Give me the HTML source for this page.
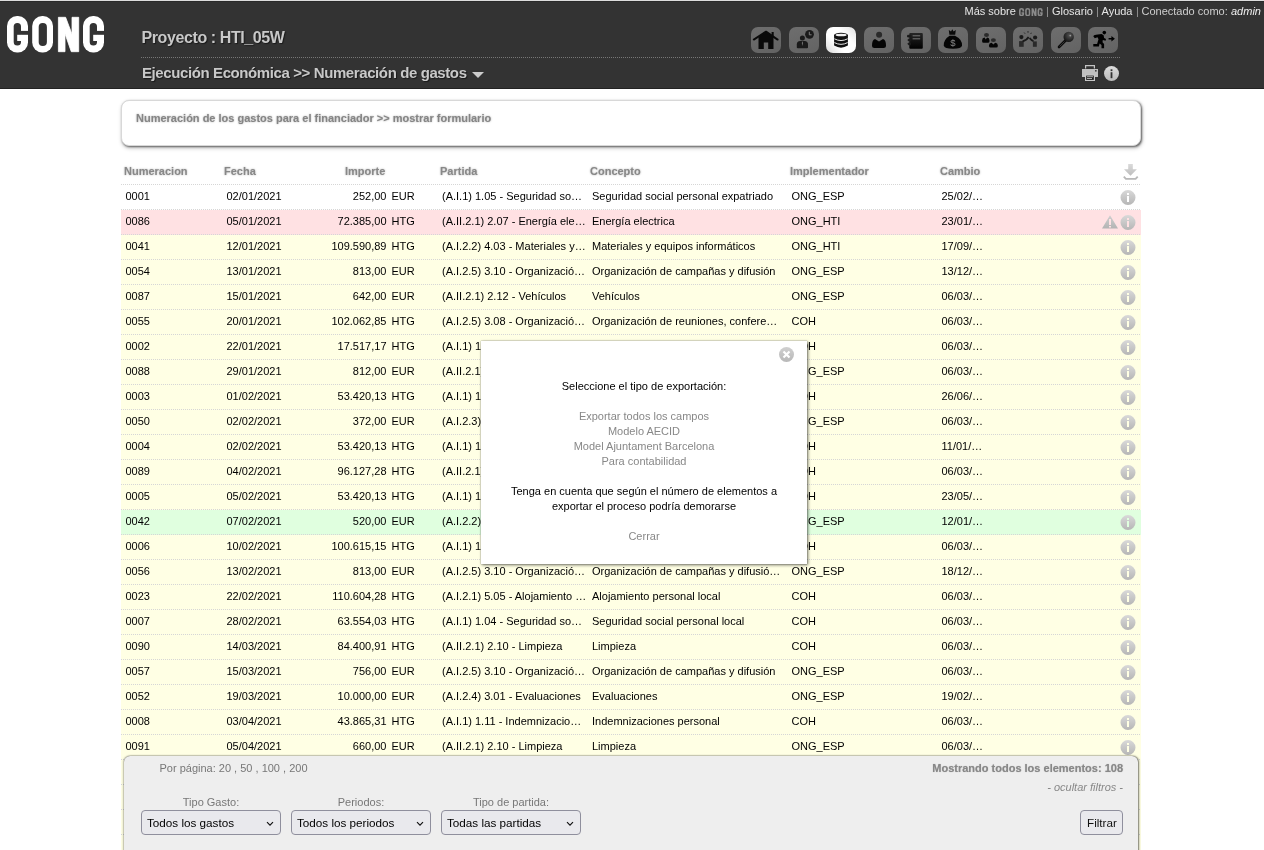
<!DOCTYPE html>
<html><head><meta charset="utf-8"><title>GONG</title>
<style>
*{box-sizing:border-box}
html,body{margin:0;padding:0;background:#fff;width:1264px;height:850px;overflow:hidden;position:relative;font-family:"Liberation Sans",sans-serif;will-change:transform}
#hdr{position:absolute;left:0;top:0;width:1264px;height:89px;background:#333;border-top:1px solid #ddd;border-bottom:1px solid #222}
#hdr .line1{position:absolute;top:0;left:0;width:100%;height:1px;background:#2a2a2a}
.logo{position:absolute;left:7px;top:15px}
.proy{position:absolute;left:141.5px;top:27.5px;font-weight:bold;font-size:16px;letter-spacing:-0.4px;color:#c8c8c8;text-shadow:1px 1px 1px #1a1a1a;white-space:nowrap}
.sep{position:absolute;left:141px;top:56px;width:979px;height:1px;border-top:1px dotted #777}
.sec{position:absolute;left:142px;top:63px;font-weight:bold;font-size:15px;letter-spacing:-0.4px;color:#c8c8c8;text-shadow:1px 1px 1px #1a1a1a;white-space:nowrap}
.tri{position:absolute;left:472px;top:71px;width:0;height:0;border-left:6px solid transparent;border-right:6px solid transparent;border-top:6px solid #ccc}
.tl{position:absolute;top:4px;font-size:11px;white-space:nowrap;line-height:13px}
.toplinks .g{color:#bbb}
.toplinks .sp{color:#aaa}
.toplinks .k{color:#ccc}
.btn{position:absolute;top:26px;width:30px;height:26px;border-radius:7px;background:linear-gradient(160deg,#6e6e6e,#636363)}
.btn.act{background:linear-gradient(45deg,#d8d8d8,#fff 35%,#fff 65%,#e0e0e0)}
.btn svg{position:absolute;left:0;top:0}
#form{position:absolute;left:121px;top:100px;width:1020px;height:46px;border:1px solid #d8d8d8;border-radius:8px;box-shadow:1px 1px 2px #666,1px 2px 4px rgba(0,0,0,0.25);background:#fff}
#form span{position:absolute;left:14px;top:11px;font-weight:bold;font-size:11px;color:#858585;text-shadow:0 0 2px #aaa}
.th{position:absolute;top:165px;font-weight:bold;font-size:11px;color:#888;text-shadow:0 0 2px #aaa;white-space:nowrap}
.hline{position:absolute;left:121px;top:184px;width:1020px;height:1px;background:repeating-linear-gradient(90deg,#d6d6d6 0 1px,transparent 1px 2px)}
.row{position:absolute;left:121px;width:1020px;height:25px}
.row::after{content:'';position:absolute;left:0;bottom:0;width:1020px;height:1px;background:repeating-linear-gradient(90deg,#d6d6d6 0 1px,transparent 1px 2px)}
.c{position:absolute;top:5px;margin-left:0.5px;font-size:11px;color:#000;white-space:nowrap;line-height:13px}

.ico{position:absolute;top:5px;line-height:0}
#modal{position:absolute;left:481px;top:341px;width:326px;height:223px;background:#fff;box-shadow:0 0 1px rgba(0,0,0,0.5),1px 1px 3px rgba(0,0,0,0.55);font-size:11px;color:#000;text-align:center}
#modal p{margin:0;position:absolute;left:0;width:100%;line-height:15px}
#modal .lk{color:#888}
#filt{position:absolute;left:124px;top:756px;width:1014px;height:100px;background:#eee;border-radius:6px 6px 0 0;box-shadow:0 0 1px rgba(0,0,0,0.5),1px 0 2px rgba(0,0,0,0.5),-1px 0 2px rgba(0,0,0,0.2)}
#filt .pp{position:absolute;left:35.5px;top:6px;font-size:11px;color:#777}
#filt .most{position:absolute;right:15px;top:6px;font-size:11px;font-weight:bold;color:#888;text-shadow:0 0 1px #aaa}
#filt .oc{position:absolute;right:15px;top:25px;font-size:11px;font-style:italic;color:#888}
#filt .lab{position:absolute;top:40px;width:140px;text-align:center;font-size:11px;color:#777}
.sel{position:absolute;top:54px;width:140px;height:25px;background:#e9e9ed;border:1px solid #8f8f9d;border-radius:4px;font-size:11.7px;color:#000;padding:5px 0 0 5px;white-space:nowrap}
.sel svg{position:absolute;right:6px;top:10px}
.fbtn{position:absolute;left:956px;top:54px;width:43px;height:25px;background:#e9e9ed;border:1px solid #8f8f9d;border-radius:4px;font-size:11.7px;color:#111;padding:5px 0 0 6px}
</style></head><body>
<svg width="0" height="0" style="position:absolute"><defs><linearGradient id="gi" x1="0" y1="0" x2="0" y2="1"><stop offset="0" stop-color="#d9d9d9"/><stop offset="1" stop-color="#b6b6b6"/></linearGradient><linearGradient id="gw" x1="0" y1="0" x2="0" y2="1"><stop offset="0" stop-color="#d0d0d0"/><stop offset="1" stop-color="#b4b4b4"/></linearGradient></defs></svg>
<div id="hdr"><div class="line1"></div>
<svg class="logo" width="100" height="40" viewBox="0 0 100 40"><g transform="translate(0,0)"><rect x="0" y="0" width="21" height="36.4" rx="10" ry="10" fill="#fff"/><rect x="6.7" y="7" width="7.3" height="22.6" rx="3.6" fill="#333"/><rect x="14" y="14.9" width="7.5" height="3.9" fill="#333"/><rect x="10.2" y="18.8" width="4" height="6.2" fill="#fff"/></g><rect x="25.2" y="0" width="20.8" height="36.4" rx="10" ry="10" fill="#fff"/><rect x="31.7" y="6.9" width="8.2" height="23" rx="4" fill="#333"/><path fill="#fff" stroke="#fff" stroke-width="0.8" stroke-linejoin="round" d="M51.4,1.3 H58.6 L65,18.2 V1.3 H71.7 V35.7 H64.3 L58,17.7 V35.7 H51.4 Z"/><g transform="translate(76,0)"><rect x="0" y="0" width="21" height="36.4" rx="10" ry="10" fill="#fff"/><rect x="6.7" y="7" width="7.3" height="22.6" rx="3.6" fill="#333"/><rect x="14" y="14.9" width="7.5" height="3.9" fill="#333"/><rect x="10.2" y="18.8" width="4" height="6.2" fill="#fff"/></g></svg>
<div class="proy">Proyecto : HTI_05W</div>
<div class="sep"></div>
<div class="sec">Ejecución Económica &gt;&gt; Numeración de gastos</div>
<div class="tri"></div>
<div class="tl" style="left:964.5px;color:#e6e6e6">Más sobre</div><svg style="position:absolute;left:1019px;top:6.5px" width="23.7" height="8.3" viewBox="0 0 97 36.4" preserveAspectRatio="none"><g fill="#8a8a8a"><path d="M10,0 H11 A10,10 0 0 1 21,10 V14.9 H14 V10.6 A3.6,3.6 0 0 0 6.7,10.6 V25.8 A3.6,3.6 0 0 0 14,25.8 V25 H10.2 V18.8 H21 V26.4 A10,10 0 0 1 11,36.4 H10 A10,10 0 0 1 0,26.4 V10 A10,10 0 0 1 10,0 Z"/><path fill-rule="evenodd" d="M35.2,0 H36 A10,10 0 0 1 46,10 V26.4 A10,10 0 0 1 36,36.4 H35.2 A10,10 0 0 1 25.2,26.4 V10 A10,10 0 0 1 35.2,0 Z M35.7,6.9 A4,4 0 0 0 31.7,10.9 V25.9 A4,4 0 0 0 39.9,25.9 V10.9 A4,4 0 0 0 35.7,6.9 Z"/><path d="M51.4,1.3 H58.6 L65,18.2 V1.3 H71.7 V35.7 H64.3 L58,17.7 V35.7 H51.4 Z"/><path transform="translate(76,0)" d="M10,0 H11 A10,10 0 0 1 21,10 V14.9 H14 V10.6 A3.6,3.6 0 0 0 6.7,10.6 V25.8 A3.6,3.6 0 0 0 14,25.8 V25 H10.2 V18.8 H21 V26.4 A10,10 0 0 1 11,36.4 H10 A10,10 0 0 1 0,26.4 V10 A10,10 0 0 1 10,0 Z"/></g></svg><div class="tl" style="left:1046px;color:#999">|</div><div class="tl" style="left:1052px;color:#e6e6e6">Glosario</div><div class="tl" style="left:1096px;color:#999">|</div><div class="tl" style="left:1101.5px;color:#e6e6e6">Ayuda</div><div class="tl" style="left:1136px;color:#999">|</div><div class="tl" style="left:1141.5px;color:#cfcfcf">Conectado como:</div><div class="tl" style="left:1231px;color:#eee;font-style:italic">admin</div>
<div class="btn" style="left:751px"><svg width="30" height="26" viewBox="0 0 30 26"><path fill="#0a0a0a" d="M7.5,10 L15,5 L22.5,10 V22 H17.2 V15.5 H12.8 V22 H7.5 Z"/><path d="M2.8,12.6 L15,4.6 L26.6,12.6" fill="none" stroke="#0a0a0a" stroke-width="1.9" stroke-linecap="round" stroke-linejoin="round"/><rect x="20.6" y="5" width="2.1" height="5" fill="#0a0a0a"/></svg></div>
<div class="btn" style="left:789px"><svg width="30" height="26" viewBox="0 0 30 26"><circle cx="20.5" cy="7.3" r="4.4" fill="#1a1a1a"/><path d="M20.3,4.8 V7.8 H22.6" stroke="#888" stroke-width="0.9" fill="none"/><circle cx="13.4" cy="11" r="2.5" fill="#1a1a1a"/><path fill="#1a1a1a" d="M7.8,20.5 V17.5 Q7.8,14 11.2,14 H15.6 Q19,14 19,17.5 V20.5 Q19,21.2 18,21.2 H8.8 Q7.8,21.2 7.8,20.5 Z"/><path d="M13.4,14 L12.8,16 L13.4,19 L14,16 Z" fill="#777"/></svg></div>
<div class="btn act" style="left:826px"><svg width="30" height="26" viewBox="0 0 30 26"><path fill="#111" d="M8.1,8.1 V18.6 Q15,22.8 21.9,18.6 V8.1 Z"/><ellipse cx="15" cy="8.1" rx="6.9" ry="2.4" fill="#111"/><ellipse cx="15.1" cy="8.1" rx="5.6" ry="1.25" fill="#f0f0f0"/><path d="M8.4,11.8 Q15,15.3 21.6,11.8 M8.4,15.6 Q15,19.1 21.6,15.6" fill="none" stroke="#e8e8e8" stroke-width="1"/></svg></div>
<div class="btn" style="left:864px"><svg width="30" height="26" viewBox="0 0 30 26"><circle cx="15.1" cy="7.8" r="3" fill="#2a2a2a"/><path fill="#050505" d="M8,18.5 Q8,13 11,12.1 L15,14.6 L19,12.1 Q22,13 22,18.5 Q22,21 19.5,21 H10.5 Q8,21 8,18.5 Z"/></svg></div>
<div class="btn" style="left:901px"><svg width="30" height="26" viewBox="0 0 30 26"><defs><linearGradient id="bk" x1="0" y1="0" x2="0" y2="1"><stop offset="0" stop-color="#252525"/><stop offset="1" stop-color="#000"/></linearGradient></defs><rect x="8.3" y="6.1" width="13.5" height="15.7" rx="1" fill="url(#bk)"/><path d="M10,8.3 H6.6 V10 H10 M10,12.2 H7.4 Q6.5,13 7.4,13.9 H10 M10,16 H7.4 Q6.5,16.8 7.4,17.7 H10" fill="#1a1a1a" stroke="#1a1a1a" stroke-width="0.9"/><rect x="11.6" y="8.3" width="7.6" height="1" fill="#777"/><rect x="11.6" y="11.3" width="7.6" height="1" fill="#777"/></svg></div>
<div class="btn" style="left:938px"><svg width="30" height="26" viewBox="0 0 30 26"><path fill="#0a0a0a" d="M10.8,3 L13,4.6 L14.3,2.2 L15.6,4.6 L17.8,3 L17.2,7.8 H11.4 Z"/><path fill="#050505" d="M11.6,8.7 H17 Q24.5,12.5 24,18.5 Q23.5,21.8 15,21.8 Q6.3,21.8 5.8,18.5 Q5.5,12.5 11.6,8.7 Z"/><text x="14.9" y="18.6" font-size="9.5" font-family="Liberation Sans" fill="#8a8a8a" text-anchor="middle">$</text></svg></div>
<div class="btn" style="left:976px"><svg width="30" height="26" viewBox="0 0 30 26"><ellipse cx="10.5" cy="8" rx="2.5" ry="1.9" fill="#2a2a2a"/><path fill="#050505" d="M6.1,14.3 V13.2 Q6.1,10.8 8.6,10.6 L9.8,12.4 L11,10.6 Q13.5,10.8 13.5,13.2 V14.3 Q13.5,15.8 12,15.8 H7.6 Q6.1,15.8 6.1,14.3 Z"/><ellipse cx="17.4" cy="13.1" rx="2.5" ry="1.9" fill="#2a2a2a"/><path fill="#050505" d="M13,19.1 V18.2 Q13,15.9 15.6,15.7 L17.4,17.5 L19.2,15.7 Q21.8,15.9 21.8,18.2 V19.1 Q21.8,20.6 20.3,20.6 H14.5 Q13,20.6 13,19.1 Z"/></svg></div>
<div class="btn" style="left:1013px"><svg width="30" height="26" viewBox="0 0 30 26"><circle cx="8.4" cy="10.1" r="2.1" fill="#1a1a1a"/><circle cx="22.1" cy="10.5" r="2.1" fill="#1a1a1a"/><rect x="6.1" y="14.1" width="4.6" height="5.7" fill="#2a2a2a"/><rect x="19.9" y="14.4" width="3.9" height="5.4" fill="#2a2a2a"/><path d="M9.5,14.3 Q13.5,13.5 15.6,10" fill="none" stroke="#1a1a1a" stroke-width="1.8"/><path d="M20.5,14 Q18.3,13.5 16.6,11" fill="none" stroke="#1a1a1a" stroke-width="1.8"/><path d="M11.2,5.6 L12,6.6 M15,4.2 V5.6 M18.3,5.8 L17.8,6.8" stroke="#1a1a1a" stroke-width="1"/></svg></div>
<div class="btn" style="left:1051px"><svg width="30" height="26" viewBox="0 0 30 26"><defs><radialGradient id="ky" cx="0.6" cy="0.35" r="0.7"><stop offset="0" stop-color="#555"/><stop offset="1" stop-color="#111"/></radialGradient></defs><path d="M14.5,13.5 L8,20" stroke="#0a0a0a" stroke-width="2.6" stroke-linecap="round"/><path d="M13.5,14.5 L8.6,19.4" stroke="#555" stroke-width="0.6"/><circle cx="17.7" cy="9.9" r="5.2" fill="url(#ky)"/><circle cx="19.3" cy="8.6" r="0.9" fill="#999"/></svg></div>
<div class="btn" style="left:1088px"><svg width="30" height="26" viewBox="0 0 30 26"><circle cx="16.3" cy="5.6" r="1.8" fill="#000"/><path fill="#000" d="M5.3,9.3 Q5.5,8 8,7.7 L13.6,7.1 L15.6,8.3 L16.1,11 L18,12 L17.6,13.8 L14.8,12.9 L14.5,15.2 L16.1,17 V21.3 H13.5 V18.1 L11.6,16.6 L10.9,19.6 H5.3 V17.1 H9.1 L10.5,12.2 L9.5,10.3 L6.8,11.3 Z"/><path fill="#000" d="M20.6,11 H23.4 V9 L26.9,11.8 L23.4,14.6 V12.6 H20.6 Z"/></svg></div>
<svg style="position:absolute;left:1082px;top:64px" width="16" height="17" viewBox="0 0 16 17"><path fill="#c4c4c4" fill-rule="evenodd" d="M3,0 H13 V3.5 H11.8 V1.2 H4.2 V3.5 H3 Z"/><rect x="0" y="4" width="16" height="8" fill="#c0c0c0"/><rect x="13" y="5" width="1.6" height="1.6" fill="#444"/><rect x="3" y="9.5" width="10" height="6.5" fill="#c8c8c8"/><rect x="4.2" y="10.6" width="7.6" height="4.3" fill="#1e1e1e"/><rect x="5" y="11.3" width="6" height="0.9" fill="#c0c0c0"/><rect x="5" y="13.1" width="5" height="0.9" fill="#c0c0c0"/></svg>
<svg style="position:absolute;left:1104px;top:65px" width="16" height="16" viewBox="0 0 16 16"><defs><linearGradient id="gh" x1="0" y1="0" x2="0" y2="1"><stop offset="0" stop-color="#ddd"/><stop offset="1" stop-color="#bbb"/></linearGradient></defs><circle cx="7.5" cy="7.5" r="7.5" fill="url(#gh)"/><rect x="6.6" y="3.3" width="1.8" height="1.8" fill="#333"/><rect x="6.6" y="6.2" width="1.8" height="6" fill="#333"/></svg>
</div>
<div id="form"><span>Numeración de los gastos para el financiador &gt;&gt; mostrar formulario</span></div>
<div class="th" style="left:124px">Numeracion</div>
<div class="th" style="left:224px">Fecha</div>
<div class="th" style="left:345px">Importe</div>
<div class="th" style="left:440px">Partida</div>
<div class="th" style="left:590px">Concepto</div>
<div class="th" style="left:790px">Implementador</div>
<div class="th" style="left:940px">Cambio</div>
<svg style="position:absolute;left:1122px;top:163px" width="18" height="18" viewBox="0 0 18 18"><defs><linearGradient id="gd" x1="0" y1="0" x2="0" y2="1"><stop offset="0" stop-color="#dadada"/><stop offset="1" stop-color="#bdbdbd"/></linearGradient></defs><path fill="url(#gd)" d="M6.2,1.1 H10.8 V6.2 H14.9 L8.5,12.8 L2,6.2 H6.2 Z"/><path fill="none" stroke="#b8b8b8" stroke-width="1.8" stroke-linejoin="round" d="M1.8,13.6 L3.9,15.8 H13.6 L15.7,13.6"/></svg>
<div class="hline"></div>
<div class="row" style="top:185px;background:#ffffff"><span class="c" style="left:4px">0001</span><span class="c" style="left:105px">02/01/2021</span><span class="c r" style="right:754.5px">252,00</span><span class="c" style="left:270px">EUR</span><span class="c e" style="left:320.5px">(A.I.1) 1.05 - Seguridad so…</span><span class="c e" style="left:470.5px">Seguridad social personal expatriado</span><span class="c" style="left:670px">ONG_ESP</span><span class="c" style="left:820px">25/02/…</span><span class="ico" style="left:999px"><svg width="16" height="15" viewBox="-1 0 16 15"><path fill="url(#gi)" fill-rule="evenodd" d="M-0.5,7.5 A7.5,7.5 0 1 0 14.5,7.5 A7.5,7.5 0 1 0 -0.5,7.5 Z M6,3 H8 V5 H6 Z M6,6 H8 V12 H6 Z"/></svg></span></div>
<div class="row" style="top:210px;background:#ffe1e3"><span class="c" style="left:4px">0086</span><span class="c" style="left:105px">05/01/2021</span><span class="c r" style="right:754.5px">72.385,00</span><span class="c" style="left:270px">HTG</span><span class="c e" style="left:320.5px">(A.II.2.1) 2.07 - Energía ele…</span><span class="c e" style="left:470.5px">Energía electrica</span><span class="c" style="left:670px">ONG_HTI</span><span class="c" style="left:820px">23/01/…</span><span class="ico" style="left:999px"><svg width="16" height="15" viewBox="-1 0 16 15"><path fill="url(#gi)" fill-rule="evenodd" d="M-0.5,7.5 A7.5,7.5 0 1 0 14.5,7.5 A7.5,7.5 0 1 0 -0.5,7.5 Z M6,3 H8 V5 H6 Z M6,6 H8 V12 H6 Z"/></svg></span><span class="ico" style="left:981px;top:5px"><svg width="16" height="14" viewBox="0 0 16 14"><path fill="url(#gw)" fill-rule="evenodd" d="M8,0.2 L16,13.4 L0,13.4 Z M7,4 H9 V10 H7 Z M7,11 H9 V12.6 H7 Z"/></svg></span></div>
<div class="row" style="top:235px;background:#ffffe4"><span class="c" style="left:4px">0041</span><span class="c" style="left:105px">12/01/2021</span><span class="c r" style="right:754.5px">109.590,89</span><span class="c" style="left:270px">HTG</span><span class="c e" style="left:320.5px">(A.I.2.2) 4.03 - Materiales y…</span><span class="c e" style="left:470.5px">Materiales y equipos informáticos</span><span class="c" style="left:670px">ONG_HTI</span><span class="c" style="left:820px">17/09/…</span><span class="ico" style="left:999px"><svg width="16" height="15" viewBox="-1 0 16 15"><path fill="url(#gi)" fill-rule="evenodd" d="M-0.5,7.5 A7.5,7.5 0 1 0 14.5,7.5 A7.5,7.5 0 1 0 -0.5,7.5 Z M6,3 H8 V5 H6 Z M6,6 H8 V12 H6 Z"/></svg></span></div>
<div class="row" style="top:260px;background:#ffffe4"><span class="c" style="left:4px">0054</span><span class="c" style="left:105px">13/01/2021</span><span class="c r" style="right:754.5px">813,00</span><span class="c" style="left:270px">EUR</span><span class="c e" style="left:320.5px">(A.I.2.5) 3.10 - Organizació…</span><span class="c e" style="left:470.5px">Organización de campañas y difusión</span><span class="c" style="left:670px">ONG_ESP</span><span class="c" style="left:820px">13/12/…</span><span class="ico" style="left:999px"><svg width="16" height="15" viewBox="-1 0 16 15"><path fill="url(#gi)" fill-rule="evenodd" d="M-0.5,7.5 A7.5,7.5 0 1 0 14.5,7.5 A7.5,7.5 0 1 0 -0.5,7.5 Z M6,3 H8 V5 H6 Z M6,6 H8 V12 H6 Z"/></svg></span></div>
<div class="row" style="top:285px;background:#ffffe4"><span class="c" style="left:4px">0087</span><span class="c" style="left:105px">15/01/2021</span><span class="c r" style="right:754.5px">642,00</span><span class="c" style="left:270px">EUR</span><span class="c e" style="left:320.5px">(A.II.2.1) 2.12 - Vehículos</span><span class="c e" style="left:470.5px">Vehículos</span><span class="c" style="left:670px">ONG_ESP</span><span class="c" style="left:820px">06/03/…</span><span class="ico" style="left:999px"><svg width="16" height="15" viewBox="-1 0 16 15"><path fill="url(#gi)" fill-rule="evenodd" d="M-0.5,7.5 A7.5,7.5 0 1 0 14.5,7.5 A7.5,7.5 0 1 0 -0.5,7.5 Z M6,3 H8 V5 H6 Z M6,6 H8 V12 H6 Z"/></svg></span></div>
<div class="row" style="top:310px;background:#ffffe4"><span class="c" style="left:4px">0055</span><span class="c" style="left:105px">20/01/2021</span><span class="c r" style="right:754.5px">102.062,85</span><span class="c" style="left:270px">HTG</span><span class="c e" style="left:320.5px">(A.I.2.5) 3.08 - Organizació…</span><span class="c e" style="left:470.5px">Organización de reuniones, confere…</span><span class="c" style="left:670px">COH</span><span class="c" style="left:820px">06/03/…</span><span class="ico" style="left:999px"><svg width="16" height="15" viewBox="-1 0 16 15"><path fill="url(#gi)" fill-rule="evenodd" d="M-0.5,7.5 A7.5,7.5 0 1 0 14.5,7.5 A7.5,7.5 0 1 0 -0.5,7.5 Z M6,3 H8 V5 H6 Z M6,6 H8 V12 H6 Z"/></svg></span></div>
<div class="row" style="top:335px;background:#ffffe4"><span class="c" style="left:4px">0002</span><span class="c" style="left:105px">22/01/2021</span><span class="c r" style="right:754.5px">17.517,17</span><span class="c" style="left:270px">HTG</span><span class="c e" style="left:320.5px">(A.I.1) 1.01 - Salarios pe…</span><span class="c e" style="left:470.5px">Salarios personal local</span><span class="c" style="left:670px">COH</span><span class="c" style="left:820px">06/03/…</span><span class="ico" style="left:999px"><svg width="16" height="15" viewBox="-1 0 16 15"><path fill="url(#gi)" fill-rule="evenodd" d="M-0.5,7.5 A7.5,7.5 0 1 0 14.5,7.5 A7.5,7.5 0 1 0 -0.5,7.5 Z M6,3 H8 V5 H6 Z M6,6 H8 V12 H6 Z"/></svg></span></div>
<div class="row" style="top:360px;background:#ffffe4"><span class="c" style="left:4px">0088</span><span class="c" style="left:105px">29/01/2021</span><span class="c r" style="right:754.5px">812,00</span><span class="c" style="left:270px">EUR</span><span class="c e" style="left:320.5px">(A.II.2.1) 2.12 - Vehículos</span><span class="c e" style="left:470.5px">Vehículos</span><span class="c" style="left:670px">ONG_ESP</span><span class="c" style="left:820px">06/03/…</span><span class="ico" style="left:999px"><svg width="16" height="15" viewBox="-1 0 16 15"><path fill="url(#gi)" fill-rule="evenodd" d="M-0.5,7.5 A7.5,7.5 0 1 0 14.5,7.5 A7.5,7.5 0 1 0 -0.5,7.5 Z M6,3 H8 V5 H6 Z M6,6 H8 V12 H6 Z"/></svg></span></div>
<div class="row" style="top:385px;background:#ffffe4"><span class="c" style="left:4px">0003</span><span class="c" style="left:105px">01/02/2021</span><span class="c r" style="right:754.5px">53.420,13</span><span class="c" style="left:270px">HTG</span><span class="c e" style="left:320.5px">(A.I.1) 1.01 - Salarios pe…</span><span class="c e" style="left:470.5px">Salarios personal local</span><span class="c" style="left:670px">COH</span><span class="c" style="left:820px">26/06/…</span><span class="ico" style="left:999px"><svg width="16" height="15" viewBox="-1 0 16 15"><path fill="url(#gi)" fill-rule="evenodd" d="M-0.5,7.5 A7.5,7.5 0 1 0 14.5,7.5 A7.5,7.5 0 1 0 -0.5,7.5 Z M6,3 H8 V5 H6 Z M6,6 H8 V12 H6 Z"/></svg></span></div>
<div class="row" style="top:410px;background:#ffffe4"><span class="c" style="left:4px">0050</span><span class="c" style="left:105px">02/02/2021</span><span class="c r" style="right:754.5px">372,00</span><span class="c" style="left:270px">EUR</span><span class="c e" style="left:320.5px">(A.I.2.3) 3.05 - Viajes…</span><span class="c e" style="left:470.5px">Viajes y estancias</span><span class="c" style="left:670px">ONG_ESP</span><span class="c" style="left:820px">06/03/…</span><span class="ico" style="left:999px"><svg width="16" height="15" viewBox="-1 0 16 15"><path fill="url(#gi)" fill-rule="evenodd" d="M-0.5,7.5 A7.5,7.5 0 1 0 14.5,7.5 A7.5,7.5 0 1 0 -0.5,7.5 Z M6,3 H8 V5 H6 Z M6,6 H8 V12 H6 Z"/></svg></span></div>
<div class="row" style="top:435px;background:#ffffe4"><span class="c" style="left:4px">0004</span><span class="c" style="left:105px">02/02/2021</span><span class="c r" style="right:754.5px">53.420,13</span><span class="c" style="left:270px">HTG</span><span class="c e" style="left:320.5px">(A.I.1) 1.01 - Salarios pe…</span><span class="c e" style="left:470.5px">Salarios personal local</span><span class="c" style="left:670px">COH</span><span class="c" style="left:820px">11/01/…</span><span class="ico" style="left:999px"><svg width="16" height="15" viewBox="-1 0 16 15"><path fill="url(#gi)" fill-rule="evenodd" d="M-0.5,7.5 A7.5,7.5 0 1 0 14.5,7.5 A7.5,7.5 0 1 0 -0.5,7.5 Z M6,3 H8 V5 H6 Z M6,6 H8 V12 H6 Z"/></svg></span></div>
<div class="row" style="top:460px;background:#ffffe4"><span class="c" style="left:4px">0089</span><span class="c" style="left:105px">04/02/2021</span><span class="c r" style="right:754.5px">96.127,28</span><span class="c" style="left:270px">HTG</span><span class="c e" style="left:320.5px">(A.II.2.1) 2.10 - Limpieza</span><span class="c e" style="left:470.5px">Limpieza</span><span class="c" style="left:670px">COH</span><span class="c" style="left:820px">06/03/…</span><span class="ico" style="left:999px"><svg width="16" height="15" viewBox="-1 0 16 15"><path fill="url(#gi)" fill-rule="evenodd" d="M-0.5,7.5 A7.5,7.5 0 1 0 14.5,7.5 A7.5,7.5 0 1 0 -0.5,7.5 Z M6,3 H8 V5 H6 Z M6,6 H8 V12 H6 Z"/></svg></span></div>
<div class="row" style="top:485px;background:#ffffe4"><span class="c" style="left:4px">0005</span><span class="c" style="left:105px">05/02/2021</span><span class="c r" style="right:754.5px">53.420,13</span><span class="c" style="left:270px">HTG</span><span class="c e" style="left:320.5px">(A.I.1) 1.01 - Salarios pe…</span><span class="c e" style="left:470.5px">Salarios personal local</span><span class="c" style="left:670px">COH</span><span class="c" style="left:820px">23/05/…</span><span class="ico" style="left:999px"><svg width="16" height="15" viewBox="-1 0 16 15"><path fill="url(#gi)" fill-rule="evenodd" d="M-0.5,7.5 A7.5,7.5 0 1 0 14.5,7.5 A7.5,7.5 0 1 0 -0.5,7.5 Z M6,3 H8 V5 H6 Z M6,6 H8 V12 H6 Z"/></svg></span></div>
<div class="row" style="top:510px;background:#e0ffdf"><span class="c" style="left:4px">0042</span><span class="c" style="left:105px">07/02/2021</span><span class="c r" style="right:754.5px">520,00</span><span class="c" style="left:270px">EUR</span><span class="c e" style="left:320.5px">(A.I.2.2) 4.03 - Materiales y…</span><span class="c e" style="left:470.5px">Materiales y equipos informáticos</span><span class="c" style="left:670px">ONG_ESP</span><span class="c" style="left:820px">12/01/…</span><span class="ico" style="left:999px"><svg width="16" height="15" viewBox="-1 0 16 15"><path fill="url(#gi)" fill-rule="evenodd" d="M-0.5,7.5 A7.5,7.5 0 1 0 14.5,7.5 A7.5,7.5 0 1 0 -0.5,7.5 Z M6,3 H8 V5 H6 Z M6,6 H8 V12 H6 Z"/></svg></span></div>
<div class="row" style="top:535px;background:#ffffe4"><span class="c" style="left:4px">0006</span><span class="c" style="left:105px">10/02/2021</span><span class="c r" style="right:754.5px">100.615,15</span><span class="c" style="left:270px">HTG</span><span class="c e" style="left:320.5px">(A.I.1) 1.01 - Salarios pe…</span><span class="c e" style="left:470.5px">Salarios personal local</span><span class="c" style="left:670px">COH</span><span class="c" style="left:820px">06/03/…</span><span class="ico" style="left:999px"><svg width="16" height="15" viewBox="-1 0 16 15"><path fill="url(#gi)" fill-rule="evenodd" d="M-0.5,7.5 A7.5,7.5 0 1 0 14.5,7.5 A7.5,7.5 0 1 0 -0.5,7.5 Z M6,3 H8 V5 H6 Z M6,6 H8 V12 H6 Z"/></svg></span></div>
<div class="row" style="top:560px;background:#ffffe4"><span class="c" style="left:4px">0056</span><span class="c" style="left:105px">13/02/2021</span><span class="c r" style="right:754.5px">813,00</span><span class="c" style="left:270px">EUR</span><span class="c e" style="left:320.5px">(A.I.2.5) 3.10 - Organizació…</span><span class="c e" style="left:470.5px">Organización de campañas y difusió…</span><span class="c" style="left:670px">ONG_ESP</span><span class="c" style="left:820px">18/12/…</span><span class="ico" style="left:999px"><svg width="16" height="15" viewBox="-1 0 16 15"><path fill="url(#gi)" fill-rule="evenodd" d="M-0.5,7.5 A7.5,7.5 0 1 0 14.5,7.5 A7.5,7.5 0 1 0 -0.5,7.5 Z M6,3 H8 V5 H6 Z M6,6 H8 V12 H6 Z"/></svg></span></div>
<div class="row" style="top:585px;background:#ffffe4"><span class="c" style="left:4px">0023</span><span class="c" style="left:105px">22/02/2021</span><span class="c r" style="right:754.5px">110.604,28</span><span class="c" style="left:270px">HTG</span><span class="c e" style="left:320.5px">(A.I.2.1) 5.05 - Alojamiento …</span><span class="c e" style="left:470.5px">Alojamiento personal local</span><span class="c" style="left:670px">COH</span><span class="c" style="left:820px">06/03/…</span><span class="ico" style="left:999px"><svg width="16" height="15" viewBox="-1 0 16 15"><path fill="url(#gi)" fill-rule="evenodd" d="M-0.5,7.5 A7.5,7.5 0 1 0 14.5,7.5 A7.5,7.5 0 1 0 -0.5,7.5 Z M6,3 H8 V5 H6 Z M6,6 H8 V12 H6 Z"/></svg></span></div>
<div class="row" style="top:610px;background:#ffffe4"><span class="c" style="left:4px">0007</span><span class="c" style="left:105px">28/02/2021</span><span class="c r" style="right:754.5px">63.554,03</span><span class="c" style="left:270px">HTG</span><span class="c e" style="left:320.5px">(A.I.1) 1.04 - Seguridad so…</span><span class="c e" style="left:470.5px">Seguridad social personal local</span><span class="c" style="left:670px">COH</span><span class="c" style="left:820px">06/03/…</span><span class="ico" style="left:999px"><svg width="16" height="15" viewBox="-1 0 16 15"><path fill="url(#gi)" fill-rule="evenodd" d="M-0.5,7.5 A7.5,7.5 0 1 0 14.5,7.5 A7.5,7.5 0 1 0 -0.5,7.5 Z M6,3 H8 V5 H6 Z M6,6 H8 V12 H6 Z"/></svg></span></div>
<div class="row" style="top:635px;background:#ffffe4"><span class="c" style="left:4px">0090</span><span class="c" style="left:105px">14/03/2021</span><span class="c r" style="right:754.5px">84.400,91</span><span class="c" style="left:270px">HTG</span><span class="c e" style="left:320.5px">(A.II.2.1) 2.10 - Limpieza</span><span class="c e" style="left:470.5px">Limpieza</span><span class="c" style="left:670px">COH</span><span class="c" style="left:820px">06/03/…</span><span class="ico" style="left:999px"><svg width="16" height="15" viewBox="-1 0 16 15"><path fill="url(#gi)" fill-rule="evenodd" d="M-0.5,7.5 A7.5,7.5 0 1 0 14.5,7.5 A7.5,7.5 0 1 0 -0.5,7.5 Z M6,3 H8 V5 H6 Z M6,6 H8 V12 H6 Z"/></svg></span></div>
<div class="row" style="top:660px;background:#ffffe4"><span class="c" style="left:4px">0057</span><span class="c" style="left:105px">15/03/2021</span><span class="c r" style="right:754.5px">756,00</span><span class="c" style="left:270px">EUR</span><span class="c e" style="left:320.5px">(A.I.2.5) 3.10 - Organizació…</span><span class="c e" style="left:470.5px">Organización de campañas y difusión</span><span class="c" style="left:670px">ONG_ESP</span><span class="c" style="left:820px">06/03/…</span><span class="ico" style="left:999px"><svg width="16" height="15" viewBox="-1 0 16 15"><path fill="url(#gi)" fill-rule="evenodd" d="M-0.5,7.5 A7.5,7.5 0 1 0 14.5,7.5 A7.5,7.5 0 1 0 -0.5,7.5 Z M6,3 H8 V5 H6 Z M6,6 H8 V12 H6 Z"/></svg></span></div>
<div class="row" style="top:685px;background:#ffffe4"><span class="c" style="left:4px">0052</span><span class="c" style="left:105px">19/03/2021</span><span class="c r" style="right:754.5px">10.000,00</span><span class="c" style="left:270px">EUR</span><span class="c e" style="left:320.5px">(A.I.2.4) 3.01 - Evaluaciones</span><span class="c e" style="left:470.5px">Evaluaciones</span><span class="c" style="left:670px">ONG_ESP</span><span class="c" style="left:820px">19/02/…</span><span class="ico" style="left:999px"><svg width="16" height="15" viewBox="-1 0 16 15"><path fill="url(#gi)" fill-rule="evenodd" d="M-0.5,7.5 A7.5,7.5 0 1 0 14.5,7.5 A7.5,7.5 0 1 0 -0.5,7.5 Z M6,3 H8 V5 H6 Z M6,6 H8 V12 H6 Z"/></svg></span></div>
<div class="row" style="top:710px;background:#ffffe4"><span class="c" style="left:4px">0008</span><span class="c" style="left:105px">03/04/2021</span><span class="c r" style="right:754.5px">43.865,31</span><span class="c" style="left:270px">HTG</span><span class="c e" style="left:320.5px">(A.I.1) 1.11 - Indemnizacio…</span><span class="c e" style="left:470.5px">Indemnizaciones personal</span><span class="c" style="left:670px">COH</span><span class="c" style="left:820px">06/03/…</span><span class="ico" style="left:999px"><svg width="16" height="15" viewBox="-1 0 16 15"><path fill="url(#gi)" fill-rule="evenodd" d="M-0.5,7.5 A7.5,7.5 0 1 0 14.5,7.5 A7.5,7.5 0 1 0 -0.5,7.5 Z M6,3 H8 V5 H6 Z M6,6 H8 V12 H6 Z"/></svg></span></div>
<div class="row" style="top:735px;background:#ffffe4"><span class="c" style="left:4px">0091</span><span class="c" style="left:105px">05/04/2021</span><span class="c r" style="right:754.5px">660,00</span><span class="c" style="left:270px">EUR</span><span class="c e" style="left:320.5px">(A.II.2.1) 2.10 - Limpieza</span><span class="c e" style="left:470.5px">Limpieza</span><span class="c" style="left:670px">ONG_ESP</span><span class="c" style="left:820px">06/03/…</span><span class="ico" style="left:999px"><svg width="16" height="15" viewBox="-1 0 16 15"><path fill="url(#gi)" fill-rule="evenodd" d="M-0.5,7.5 A7.5,7.5 0 1 0 14.5,7.5 A7.5,7.5 0 1 0 -0.5,7.5 Z M6,3 H8 V5 H6 Z M6,6 H8 V12 H6 Z"/></svg></span></div>
<div class="row" style="top:760px;background:#ffffe4"><span class="c" style="left:4px">0009</span><span class="c" style="left:105px">10/04/2021</span><span class="c r" style="right:754.5px">43.865,31</span><span class="c" style="left:270px">HTG</span><span class="c e" style="left:320.5px">(A.I.1) 1.01 - Salarios pe…</span><span class="c e" style="left:470.5px">Salarios personal local</span><span class="c" style="left:670px">COH</span><span class="c" style="left:820px">06/03/…</span><span class="ico" style="left:999px"><svg width="16" height="15" viewBox="-1 0 16 15"><path fill="url(#gi)" fill-rule="evenodd" d="M-0.5,7.5 A7.5,7.5 0 1 0 14.5,7.5 A7.5,7.5 0 1 0 -0.5,7.5 Z M6,3 H8 V5 H6 Z M6,6 H8 V12 H6 Z"/></svg></span></div>
<div class="row" style="top:785px;background:#ffffe4"><span class="c" style="left:4px">0092</span><span class="c" style="left:105px">12/04/2021</span><span class="c r" style="right:754.5px">660,00</span><span class="c" style="left:270px">EUR</span><span class="c e" style="left:320.5px">(A.II.2.1) 2.10 - Limpieza</span><span class="c e" style="left:470.5px">Limpieza</span><span class="c" style="left:670px">ONG_ESP</span><span class="c" style="left:820px">06/03/…</span><span class="ico" style="left:999px"><svg width="16" height="15" viewBox="-1 0 16 15"><path fill="url(#gi)" fill-rule="evenodd" d="M-0.5,7.5 A7.5,7.5 0 1 0 14.5,7.5 A7.5,7.5 0 1 0 -0.5,7.5 Z M6,3 H8 V5 H6 Z M6,6 H8 V12 H6 Z"/></svg></span></div>
<div class="row" style="top:810px;background:#ffffe4"><span class="c" style="left:4px">0010</span><span class="c" style="left:105px">15/04/2021</span><span class="c r" style="right:754.5px">43.865,31</span><span class="c" style="left:270px">HTG</span><span class="c e" style="left:320.5px">(A.I.1) 1.01 - Salarios pe…</span><span class="c e" style="left:470.5px">Salarios personal local</span><span class="c" style="left:670px">COH</span><span class="c" style="left:820px">06/03/…</span><span class="ico" style="left:999px"><svg width="16" height="15" viewBox="-1 0 16 15"><path fill="url(#gi)" fill-rule="evenodd" d="M-0.5,7.5 A7.5,7.5 0 1 0 14.5,7.5 A7.5,7.5 0 1 0 -0.5,7.5 Z M6,3 H8 V5 H6 Z M6,6 H8 V12 H6 Z"/></svg></span></div>
<div class="row" style="top:835px;background:#ffffe4"><span class="c" style="left:4px">0093</span><span class="c" style="left:105px">20/04/2021</span><span class="c r" style="right:754.5px">660,00</span><span class="c" style="left:270px">EUR</span><span class="c e" style="left:320.5px">(A.II.2.1) 2.10 - Limpieza</span><span class="c e" style="left:470.5px">Limpieza</span><span class="c" style="left:670px">ONG_ESP</span><span class="c" style="left:820px">06/03/…</span><span class="ico" style="left:999px"><svg width="16" height="15" viewBox="-1 0 16 15"><path fill="url(#gi)" fill-rule="evenodd" d="M-0.5,7.5 A7.5,7.5 0 1 0 14.5,7.5 A7.5,7.5 0 1 0 -0.5,7.5 Z M6,3 H8 V5 H6 Z M6,6 H8 V12 H6 Z"/></svg></span></div>
<div id="filt">
<div class="pp">Por página: 20 , 50 , 100 , 200</div>
<div class="most">Mostrando todos los elementos: 108</div>
<div class="oc">- ocultar filtros -</div>
<div class="lab" style="left:17px">Tipo Gasto:</div>
<div class="lab" style="left:167px">Periodos:</div>
<div class="lab" style="left:317px">Tipo de partida:</div>
<div class="sel" style="left:17px">Todos los gastos <svg width="8" height="6" viewBox="0 0 8 6"><path d="M1,1.2 L4,4.2 L7,1.2" fill="none" stroke="#111" stroke-width="1.15"/></svg></div>
<div class="sel" style="left:167px">Todos los periodos <svg width="8" height="6" viewBox="0 0 8 6"><path d="M1,1.2 L4,4.2 L7,1.2" fill="none" stroke="#111" stroke-width="1.15"/></svg></div>
<div class="sel" style="left:317px">Todas las partidas <svg width="8" height="6" viewBox="0 0 8 6"><path d="M1,1.2 L4,4.2 L7,1.2" fill="none" stroke="#111" stroke-width="1.15"/></svg></div>
<div class="fbtn">Filtrar</div>
</div>
<div id="modal">
<svg style="position:absolute;left:298px;top:6px" width="15" height="15" viewBox="0 0 15 15"><defs><linearGradient id="gx" x1="0" y1="0" x2="0" y2="1"><stop offset="0" stop-color="#d0d0d0"/><stop offset="1" stop-color="#b8b8b8"/></linearGradient></defs><circle cx="7.5" cy="7.5" r="7.5" fill="url(#gx)"/><path d="M4.5,4.5 L10.5,10.5 M10.5,4.5 L4.5,10.5" stroke="#fff" stroke-width="2.2"/></svg>
<p style="top:38px">Seleccione el tipo de exportación:</p>
<p class="lk" style="top:68px">Exportar todos los campos<br>Modelo AECID<br>Model Ajuntament Barcelona<br>Para contabilidad</p>
<p style="top:143px">Tenga en cuenta que según el número de elementos a<br>exportar el proceso podría demorarse</p>
<p class="lk" style="top:188px">Cerrar</p>
</div>
</body></html>
